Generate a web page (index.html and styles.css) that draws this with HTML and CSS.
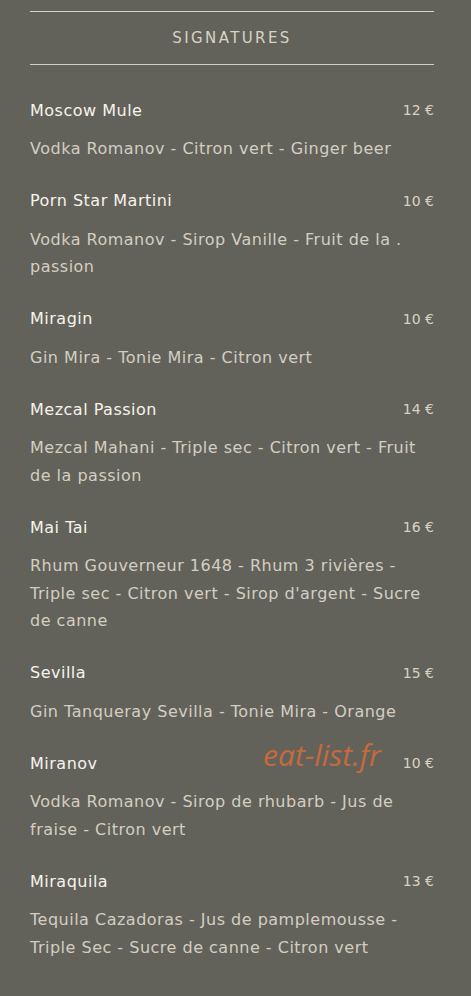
FILE: index.html
```html
<!DOCTYPE html>
<html lang="fr">
<head>
  <meta charset="UTF-8" />
  <title>Signatures</title>
  <meta name="viewport" content="width=device-width, initial-scale=1.0" />
  <link rel="stylesheet" href="styles.css">
</head>
<body>

<div class="menu">
  <h2 class="section-title">SIGNATURES</h2>

  <div class="item">
    <div class="item-head"><span class="name">Moscow Mule</span><span class="price">12 €</span></div>
    <p class="desc">Vodka Romanov - Citron vert - Ginger beer</p>
  </div>

  <div class="item">
    <div class="item-head"><span class="name">Porn Star Martini</span><span class="price">10 €</span></div>
    <p class="desc">Vodka Romanov - Sirop Vanille - Fruit de la .<br>passion</p>
  </div>

  <div class="item">
    <div class="item-head"><span class="name">Miragin</span><span class="price">10 €</span></div>
    <p class="desc">Gin Mira - Tonie Mira - Citron vert</p>
  </div>

  <div class="item">
    <div class="item-head"><span class="name">Mezcal Passion</span><span class="price">14 €</span></div>
    <p class="desc">Mezcal Mahani - Triple sec - Citron vert - Fruit<br>de la passion</p>
  </div>

  <div class="item">
    <div class="item-head"><span class="name">Mai Tai</span><span class="price">16 €</span></div>
    <p class="desc">Rhum Gouverneur 1648 - Rhum 3 rivières -<br>Triple sec - Citron vert - Sirop d'argent - Sucre<br>de canne</p>
  </div>

  <div class="item">
    <div class="item-head"><span class="name">Sevilla</span><span class="price">15 €</span></div>
    <p class="desc">Gin Tanqueray Sevilla - Tonie Mira - Orange</p>
  </div>

  <div class="item">
    <div class="item-head"><span class="name">Miranov</span><span class="price">10 €</span></div>
    <p class="desc">Vodka Romanov - Sirop de rhubarb - Jus de<br>fraise - Citron vert</p>
    <span class="watermark">eat-list.fr</span>
  </div>

  <div class="item">
    <div class="item-head"><span class="name">Miraquila</span><span class="price">13 €</span></div>
    <p class="desc">Tequila Cazadoras - Jus de pamplemousse -<br>Triple Sec - Sucre de canne - Citron vert</p>
  </div>
</div>

</body>
</html>
```

FILE: styles.css
```css
body { margin: 0; background: #63625a; font-family: "DejaVu Sans", sans-serif; }
.menu { margin: 0 37px 0 30px; padding-top: 11px; }

.section-title {
  margin: 0; padding: 0;
  height: 52px; line-height: 52px;
  border-top: 1px solid #d6d0c3; border-bottom: 1px solid #d6d0c3;
  text-align: center; font-size: 15px; font-weight: normal;
  letter-spacing: 2.4px; color: #d8d2c4;
}

.item { position: relative; padding-top: 33px; }
.item + .item { padding-top: 26px; }
.item-head { display: flex; justify-content: space-between; align-items: center; height: 24px; }
.name { font-size: 16px; letter-spacing: 0.5px; color: #f6f3ec; }
.price { font-size: 14px; color: #d8d2c4; }
.desc { margin: 13px 0 0; font-size: 16px; letter-spacing: 0.5px; line-height: 27.5px; color: #d3cec2; }

.watermark {
  position: absolute; left: 233px; top: 9px;
  font-family: "Open Sans", sans-serif; font-style: italic;
  font-size: 30px; color: #c46a40;
}
```
